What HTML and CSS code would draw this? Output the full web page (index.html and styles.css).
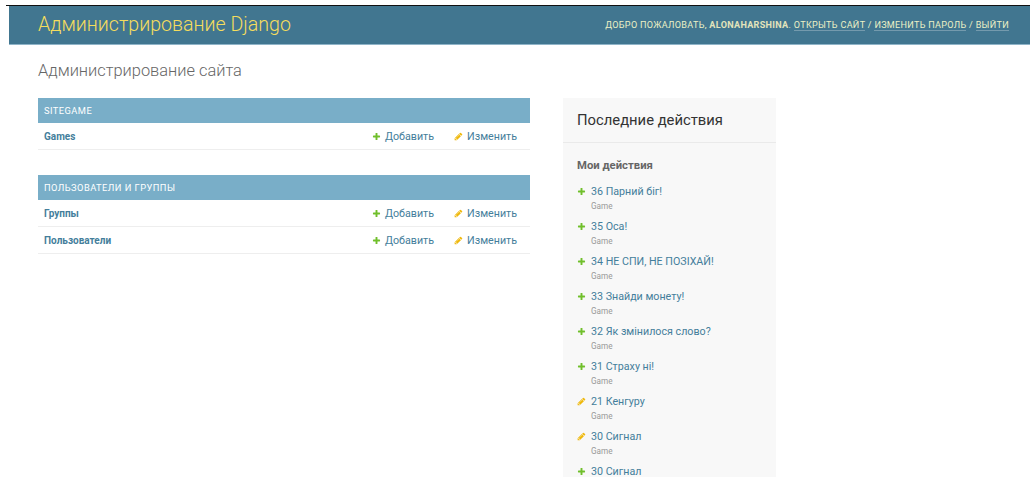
FILE: index.html
```html
<!DOCTYPE html>
<html lang="ru">
<head>
<meta charset="utf-8">
<title>Администрирование сайта | Администрирование Django</title>
<link rel="stylesheet" href="styles.css">
</head>
<body>
<div class="doc-rule"></div>
<div class="page">
  <header class="header">
    <div class="branding"><a href="#">Администрирование Django</a></div>
    <div class="user-tools">
      Добро пожаловать, <strong>alonaharshina</strong>.
      <a href="#">Открыть сайт</a> /
      <a href="#">Изменить пароль</a> /
      <a href="#">Выйти</a>
    </div>
  </header>

  <main class="content">
    <h1 class="page-title">Администрирование сайта</h1>
    <div class="columns">
      <div class="apps">
        <section class="module">
          <div class="caption">Sitegame</div>
          <div class="row">
            <a class="model" href="#">Games</a>
            <a class="action add" href="#"><svg class="icon" viewBox="0 0 1792 1792"><path fill="#70bf2b" d="M1600 796v192q0 40-28 68t-68 28h-416v416q0 40-28 68t-68 28h-192q-40 0-68-28t-28-68v-416h-416q-40 0-68-28t-28-68v-192q0-40 28-68t68-28h416v-416q0-40 28-68t68-28h192q40 0 68 28t28 68v416h416q40 0 68 28t28 68z"/></svg>Добавить</a>
            <a class="action change" href="#"><svg class="icon" viewBox="0 0 1792 1792"><path fill="#efb80b" d="M491 1536l91-91-235-235-91 91v107h128v128h107zm523-928q0-22-22-22-10 0-17 7l-542 542q-7 7-7 17 0 22 22 22 10 0 17-7l542-542q7-7 7-17zm-54-192l416 416-832 832h-416v-416zm683 96q0 53-37 90l-166 166-416-416 166-165q36-38 90-38 53 0 91 38l235 234q37 39 37 91z"/></svg>Изменить</a>
          </div>
        </section>

        <section class="module">
          <div class="caption">Пользователи и группы</div>
          <div class="row">
            <a class="model" href="#">Группы</a>
            <a class="action add" href="#"><svg class="icon" viewBox="0 0 1792 1792"><path fill="#70bf2b" d="M1600 796v192q0 40-28 68t-68 28h-416v416q0 40-28 68t-68 28h-192q-40 0-68-28t-28-68v-416h-416q-40 0-68-28t-28-68v-192q0-40 28-68t68-28h416v-416q0-40 28-68t68-28h192q40 0 68 28t28 68v416h416q40 0 68 28t28 68z"/></svg>Добавить</a>
            <a class="action change" href="#"><svg class="icon" viewBox="0 0 1792 1792"><path fill="#efb80b" d="M491 1536l91-91-235-235-91 91v107h128v128h107zm523-928q0-22-22-22-10 0-17 7l-542 542q-7 7-7 17 0 22 22 22 10 0 17-7l542-542q7-7 7-17zm-54-192l416 416-832 832h-416v-416zm683 96q0 53-37 90l-166 166-416-416 166-165q36-38 90-38 53 0 91 38l235 234q37 39 37 91z"/></svg>Изменить</a>
          </div>
          <div class="row">
            <a class="model" href="#">Пользователи</a>
            <a class="action add" href="#"><svg class="icon" viewBox="0 0 1792 1792"><path fill="#70bf2b" d="M1600 796v192q0 40-28 68t-68 28h-416v416q0 40-28 68t-68 28h-192q-40 0-68-28t-28-68v-416h-416q-40 0-68-28t-28-68v-192q0-40 28-68t68-28h416v-416q0-40 28-68t68-28h192q40 0 68 28t28 68v416h416q40 0 68 28t28 68z"/></svg>Добавить</a>
            <a class="action change" href="#"><svg class="icon" viewBox="0 0 1792 1792"><path fill="#efb80b" d="M491 1536l91-91-235-235-91 91v107h128v128h107zm523-928q0-22-22-22-10 0-17 7l-542 542q-7 7-7 17 0 22 22 22 10 0 17-7l542-542q7-7 7-17zm-54-192l416 416-832 832h-416v-416zm683 96q0 53-37 90l-166 166-416-416 166-165q36-38 90-38 53 0 91 38l235 234q37 39 37 91z"/></svg>Изменить</a>
          </div>
        </section>
      </div>

      <aside class="recent">
        <h2 class="recent-title">Последние действия</h2>
        <h3 class="recent-sub">Мои действия</h3>
        <ul class="actions">
          <li class="addlink"><a href="#">36 Парний біг!</a><span class="type">Game</span></li>
          <li class="addlink"><a href="#">35 Оса!</a><span class="type">Game</span></li>
          <li class="addlink"><a href="#">34 НЕ СПИ, НЕ ПОЗІХАЙ!</a><span class="type">Game</span></li>
          <li class="addlink"><a href="#">33 Знайди монету!</a><span class="type">Game</span></li>
          <li class="addlink"><a href="#">32 Як змінилося слово?</a><span class="type">Game</span></li>
          <li class="addlink"><a href="#">31 Страху ні!</a><span class="type">Game</span></li>
          <li class="changelink"><a href="#">21 Кенгуру</a><span class="type">Game</span></li>
          <li class="changelink"><a href="#">30 Сигнал</a><span class="type">Game</span></li>
          <li class="addlink"><a href="#">30 Сигнал</a></li>
        </ul>
      </aside>
    </div>
  </main>
</div>
</body>
</html>
```

FILE: styles.css
```css
html, body {
  margin: 0;
  padding: 0;
  background: #fff;
}

body {
  font-family: Roboto, "Liberation Sans", sans-serif;
  color: #333;
  overflow: hidden;
}

a {
  text-decoration: none;
  color: #447e9b;
}

/* thin rule above the page frame */
.doc-rule {
  height: 5px;
  margin-left: 6px;
  border-bottom: 1px solid #111;
}

.page {
  margin-left: 9px;
}

/* top bar */
.header {
  height: 38px;
  background: #417690;
  border-bottom: 1px solid #8fb4c8;
  display: flex;
  align-items: center;
  justify-content: space-between;
  padding: 0 21px 0 29px;
}

.branding a {
  color: #f5dd5d;
  font-size: 19.6px;
  font-weight: 300;
  line-height: 22px;
}

.user-tools {
  color: #ffffcc;
  font-size: 9.05px;
  letter-spacing: 0.32px;
  text-transform: uppercase;
  opacity: 0.9;
}

.user-tools strong {
  color: #f5f0c0;
  font-weight: 700;
}

.user-tools a {
  color: #ffffcc;
  border-bottom: 1px solid rgba(255, 255, 255, 0.3);
}

/* main area */
.content {
  padding: 17px 29px;
}

.page-title {
  margin: 0 0 18px;
  font-size: 16.4px;
  line-height: 18px;
  font-weight: 300;
  color: #666;
}

.columns {
  display: flex;
  align-items: flex-start;
  gap: 33px;
}

.apps {
  width: 492px;
}

.module {
  margin-bottom: 25px;
}

.caption {
  height: 25px;
  line-height: 25px;
  background: #79aec8;
  color: #fff;
  font-size: 9.3px;
  letter-spacing: 0.45px;
  text-transform: uppercase;
  padding: 0 6px;
}

.row {
  display: flex;
  align-items: center;
  height: 26px;
  border-bottom: 1px solid #eee;
  padding: 0 13px 0 6px;
  font-size: 10px;
}

.model {
  flex: 1;
  font-weight: 700;
}

.action {
  display: inline-flex;
  align-items: center;
  font-size: 10.7px;
}

.action.change {
  margin-left: 20px;
}

.icon {
  width: 9px;
  height: 9px;
  margin-right: 4px;
}

/* sidebar with recent actions */
.recent {
  width: 213px;
  background: #f8f8f8;
  min-height: 400px;
}

.recent-title {
  margin: 0;
  padding: 12px 14px;
  border-bottom: 1px solid #eaeaea;
  font-size: 14.8px;
  line-height: 20px;
  font-weight: 400;
  color: #333;
}

.recent-sub {
  margin: 16px 14px 12px;
  font-size: 11.3px;
  line-height: 14px;
  font-weight: 700;
  color: #666;
}

.actions {
  list-style: none;
  margin: 0;
  padding: 0 14px;
}

.actions li {
  position: relative;
  padding-left: 14px;
  margin-bottom: 7px;
}

.actions li::before {
  content: "";
  position: absolute;
  left: 0;
  top: 2px;
  width: 9px;
  height: 9px;
  background-repeat: no-repeat;
  background-size: 9px 9px;
}

.actions li.addlink::before {
  background-image: url("data:image/svg+xml;utf8,<svg xmlns='http://www.w3.org/2000/svg' viewBox='0 0 1792 1792'><path fill='%2370bf2b' d='M1600 796v192q0 40-28 68t-68 28h-416v416q0 40-28 68t-68 28h-192q-40 0-68-28t-28-68v-416h-416q-40 0-68-28t-28-68v-192q0-40 28-68t68-28h416v-416q0-40 28-68t68-28h192q40 0 68 28t28 68v416h416q40 0 68 28t28 68z'/></svg>");
}

.actions li.changelink::before {
  background-image: url("data:image/svg+xml;utf8,<svg xmlns='http://www.w3.org/2000/svg' viewBox='0 0 1792 1792'><path fill='%23efb80b' d='M491 1536l91-91-235-235-91 91v107h128v128h107zm523-928q0-22-22-22-10 0-17 7l-542 542q-7 7-7 17 0 22 22 22 10 0 17-7l542-542q7-7 7-17zm-54-192l416 416-832 832h-416v-416zm683 96q0 53-37 90l-166 166-416-416 166-165q36-38 90-38 53 0 91 38l235 234q37 39 37 91z'/></svg>");
}

.actions a {
  display: block;
  font-size: 10.7px;
  line-height: 14px;
}

.actions .type {
  display: block;
  font-size: 8.2px;
  line-height: 14px;
  color: #999;
}
```
